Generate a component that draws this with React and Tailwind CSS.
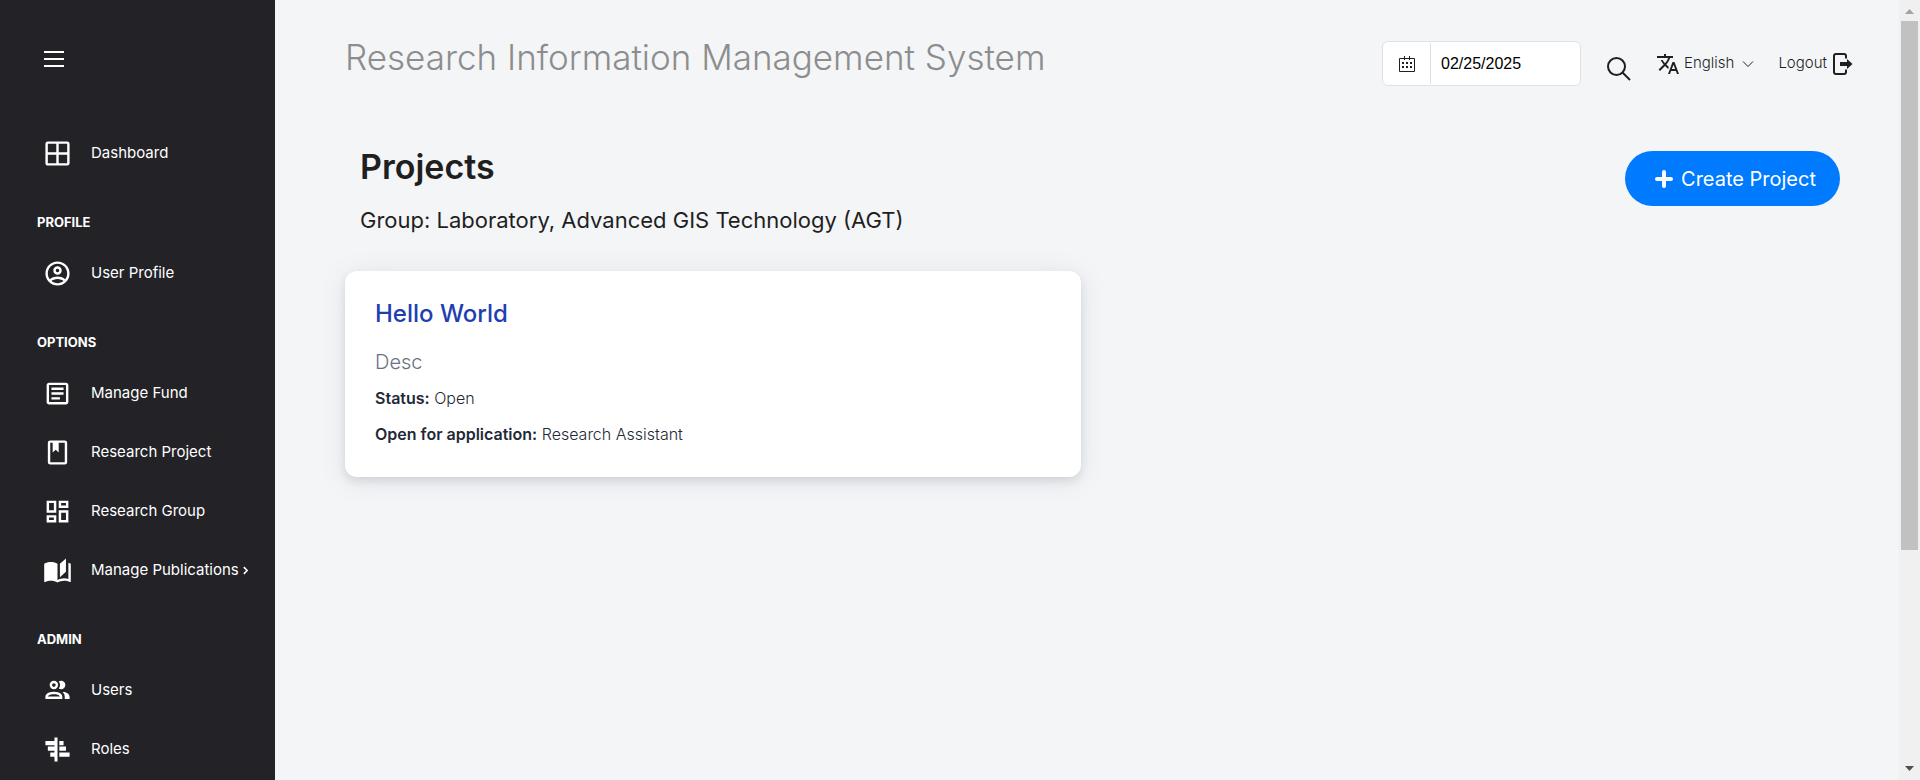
import React from "react";

const icons = {
  grid: "M4,2H20A2,2 0 0,1 22,4V20A2,2 0 0,1 20,22H4C2.92,22 2,21.1 2,20V4A2,2 0 0,1 4,2M4,4V11H11V4H4M4,20H11V13H4V20M20,20V13H13V20H20M20,4H13V11H20V4Z",
  account: "M12,2A10,10 0 0,0 2,12A10,10 0 0,0 12,22A10,10 0 0,0 22,12A10,10 0 0,0 12,2M7.07,18.28C7.5,17.38 10.12,16.5 12,16.5C13.88,16.5 16.5,17.38 16.93,18.28C15.57,19.36 13.86,20 12,20C10.14,20 8.43,19.36 7.07,18.28M18.36,16.83C16.93,15.09 13.46,14.5 12,14.5C10.54,14.5 7.07,15.09 5.64,16.83C4.62,15.5 4,13.82 4,12C4,7.59 7.59,4 12,4C16.41,4 20,7.59 20,12C20,13.82 19.38,15.5 18.36,16.83M12,6C10.06,6 8.5,7.56 8.5,9.5C8.5,11.44 10.06,13 12,13C13.94,13 15.5,11.44 15.5,9.5C15.5,7.56 13.94,6 12,6M12,11A1.5,1.5 0 0,1 10.5,9.5A1.5,1.5 0 0,1 12,8A1.5,1.5 0 0,1 13.5,9.5A1.5,1.5 0 0,1 12,11Z",
  document: "M5,3C3.89,3 3,3.89 3,5V19C3,20.11 3.89,21 5,21H19C20.11,21 21,20.11 21,19V5C21,3.89 20.11,3 19,3H5M5,5H19V19H5V5M7,7V9H17V7H7M7,11V13H17V11H7M7,15V17H14V15H7Z",
  book: "M18,2A2,2 0 0,1 20,4V20A2,2 0 0,1 18,22H6A2,2 0 0,1 4,20V4A2,2 0 0,1 6,2H18M18,4H13V12L10.5,9.75L8,12V4H6V20H18V4Z",
  dashboard: "M19,5V7H15V5H19M9,5V11H5V5H9M19,13V19H15V13H19M9,17V19H5V17H9M21,3H13V9H21V3M11,3H3V13H11V3M21,11H13V21H21V11M11,15H3V21H11V15Z",
  openBook: "M19,2L14,6.5V17.5L19,13V2M6.5,5C4.55,5 2.45,5.4 1,6.5V21.16C1,21.41 1.25,21.66 1.5,21.66C1.6,21.66 1.65,21.59 1.75,21.59C3.1,20.94 5.05,20.5 6.5,20.5C8.45,20.5 10.55,20.9 12,22C13.35,21.15 15.8,20.5 17.5,20.5C19.15,20.5 20.85,20.81 22.25,21.56C22.35,21.61 22.4,21.59 22.5,21.59C22.75,21.59 23,21.34 23,21.09V6.5C22.4,6.05 21.75,5.75 21,5.5V19C19.9,18.65 18.7,18.5 17.5,18.5C15.8,18.5 13.35,19.15 12,20V6.5C10.55,5.4 8.45,5 6.5,5Z",
  users: "M13.07 10.41A5 5 0 0 0 13.07 4.59A3.39 3.39 0 0 1 15 4A3.5 3.5 0 0 1 15 11A3.39 3.39 0 0 1 13.07 10.41M5.5 7.5A3.5 3.5 0 1 1 9 11A3.5 3.5 0 0 1 5.5 7.5M7.5 7.5A1.5 1.5 0 1 0 9 6A1.5 1.5 0 0 0 7.5 7.5M16 17V19H2V17S2 13 9 13 16 17 16 17M14 17C13.86 16.22 12.67 15 9 15S4.07 16.31 4 17M15.95 13A5.32 5.32 0 0 1 18 17V19H22V17S22 13.37 15.94 13Z",
  roles: "M2,5H9.5V2H12V22H9.5V18H6V14.5H9.5V13H4V9.5H9.5V8.5H2V5M13.5,5H17V8.5H13.5V5M13.5,9.5H19V13H13.5V9.5M13.5,14.5H22V18H13.5V14.5Z",
  translate: "M12.87,15.07L10.33,12.56L10.36,12.53C12.1,10.59 13.34,8.36 14.07,6H17V4H10V2H8V4H1V6H12.17C11.5,7.92 10.44,9.75 9,11.35C8.07,10.32 7.3,9.19 6.69,8H4.69C5.42,9.63 6.42,11.17 7.67,12.56L2.58,17.58L4,19L9,14L12.11,17.11L12.87,15.07M18.5,10H16.5L12,22H14L15.12,19H19.87L21,22H23L18.5,10M15.88,17L17.5,12.67L19.12,17H15.88Z",
};

function Icon({ name, className }) {
  return (
    <svg viewBox="0 0 24 24" fill="currentColor" aria-hidden="true" className={className}>
      <path d={icons[name]} />
    </svg>
  );
}

const sections = [
  { items: [{ label: "Dashboard", icon: "grid" }] },
  { title: "PROFILE", items: [{ label: "User Profile", icon: "account" }] },
  {
    title: "OPTIONS",
    items: [
      { label: "Manage Fund", icon: "document" },
      { label: "Research Project", icon: "book" },
      { label: "Research Group", icon: "dashboard" },
      { label: "Manage Publications", icon: "openBook", more: true },
    ],
  },
  {
    title: "ADMIN",
    items: [
      { label: "Users", icon: "users" },
      { label: "Roles", icon: "roles" },
    ],
  },
];

function Sidebar() {
  return (
    <aside className="w-[275px] shrink-0 bg-[#222227] text-white">
      <button type="button" aria-label="Toggle menu" className="ml-11 mt-[49px] block h-5 w-5">
        <svg viewBox="0 0 20 20" stroke="currentColor" strokeWidth="2" aria-hidden="true">
          <path d="M0 3H20M0 10H20M0 17H20" />
        </svg>
      </button>
      <nav className="mt-[55px]">
        {sections.map((section, i) => (
          <section key={i}>
            {section.title && (
              <h2 className="flex h-[61px] items-end pb-3 pl-[37px] text-[13px] leading-5 font-bold">{section.title}</h2>
            )}
            <ul>
              {section.items.map((item) => (
                <li key={item.label}>
                  <a href="#" className="flex h-[59px] items-center pl-[43px] text-[15px]">
                    <Icon name={item.icon} className="mr-[19px] h-[29px] w-[29px]" />
                    <span>{item.label}</span>
                    {item.more && (
                      <svg viewBox="0 0 6 10" fill="none" stroke="currentColor" strokeWidth="2" aria-hidden="true" className="ml-1 h-[9px] w-[5px]">
                        <path d="M1 1L5 5L1 9" />
                      </svg>
                    )}
                  </a>
                </li>
              ))}
            </ul>
          </section>
        ))}
      </nav>
    </aside>
  );
}

function Header() {
  return (
    <header className="flex h-[124px] items-start justify-between pl-[70px] pr-[46px] pt-8">
      <h1 className="text-[35px] leading-[50px] font-light text-[#8d8d8d]">Research Information Management System</h1>
      <div className="flex items-center pt-[9px] text-[15px] font-light text-[#1f1f1f]">
        <label className="flex h-[45px] w-[199px] items-stretch overflow-hidden rounded-md border border-[#dee2e6] bg-white py-px">
          <span className="flex w-12 shrink-0 items-center justify-center border-r border-[#dee2e6]">
            <svg viewBox="0 0 16 16" fill="none" stroke="#1f1f1f" aria-hidden="true" className="h-4 w-4">
              <path d="M0.5 2.5H15.5V15.5H0.5ZM5.5 0V4M10.5 0V4" />
              <path d="M3 7H5M7 7H9M11 7H13M3 11H5M7 11H9M11 11H13" strokeWidth="2" />
            </svg>
          </span>
          <input aria-label="Date" defaultValue="02/25/2025" className="w-full min-w-0 px-2.5 font-['Liberation_Sans',sans-serif] text-[16px] font-normal text-black outline-none" />
        </label>
        <button type="button" aria-label="Search" className="ml-[26px] mt-2.5">
          <svg viewBox="0 0 24 24" fill="none" stroke="currentColor" strokeWidth="2" aria-hidden="true" className="h-6 w-6">
            <circle cx="9.5" cy="9.5" r="8.5" />
            <path d="M15.5 15.5L23 23" />
          </svg>
        </button>
        <button type="button" className="ml-[25px] flex items-center">
          <Icon name="translate" className="h-6 w-6" />
          <span className="ml-1">English</span>
          <svg viewBox="0 0 12 8" fill="none" stroke="currentColor" aria-hidden="true" className="ml-2 h-2 w-3">
            <path d="M1 1.5L6 6.5L11 1.5" />
          </svg>
        </button>
        <a href="#" className="ml-6 flex items-center">
          <span>Logout</span>
          <svg viewBox="0 0 20 22" fill="none" stroke="currentColor" strokeWidth="2" aria-hidden="true" className="ml-1.5 h-[22px] w-5">
            <path d="M13 5.5V3Q13 1 11 1H3Q1 1 1 3V19Q1 21 3 21H11Q13 21 13 19V16.5" />
            <path d="M7 9H14V6L19.5 11L14 16V13H7Z" fill="currentColor" stroke="none" />
          </svg>
        </a>
      </div>
    </header>
  );
}

function ProjectCard() {
  return (
    <article className="ml-[70px] mt-[35px] w-[736px] max-w-full rounded-xl bg-white px-[30px] pt-[25px] pb-[31px] text-[16px] leading-6 font-light text-[#1f2937] shadow-[0_4px_8px_rgba(30,40,60,0.12),0_4px_30px_rgba(30,40,60,0.08)]">
      <h3 className="text-[24px] leading-9 font-medium text-[#1e40af]">Hello World</h3>
      <p className="mt-3.5 text-[20px] leading-8 text-[#6b7280]">Desc</p>
      <p className="mt-2"><strong className="font-semibold">Status:</strong> Open</p>
      <p className="mt-3"><strong className="font-semibold">Open for application:</strong> Research Assistant</p>
    </article>
  );
}

function ScrollRail() {
  return (
    <div aria-hidden="true" className="flex w-[21px] shrink-0 flex-col items-center bg-[#f0f0f0]">
      <svg viewBox="0 0 9 5" className="mb-[7px] mt-[9px] h-[5px] w-[9px]" fill="#a3a3a3"><path d="M0 5L4.5 0L9 5Z" /></svg>
      <div className="w-[17px] flex-[528] bg-[#c1c1c1]" />
      <div className="flex-[216]" />
      <svg viewBox="0 0 9 5" className="mb-[9px] h-[5px] w-[9px]" fill="#505050"><path d="M0 0L4.5 5L9 0Z" /></svg>
    </div>
  );
}

export default function App() {
  return (
    <div className="flex h-screen overflow-hidden bg-[#f4f5f7] font-['Inter',sans-serif]">
      <Sidebar />
      <main className="min-w-0 flex-1">
        <Header />
        <div className="flex items-start justify-between pl-[85px] pr-[59px] text-[#1f1f1f]">
          <div className="pt-5">
            <h2 className="text-[34px] leading-[46px] font-semibold">Projects</h2>
            <p className="mt-3.5 text-[22px] leading-8">Group: Laboratory, Advanced GIS Technology (AGT)</p>
          </div>
          <button type="button" className="mt-[27px] flex h-[55px] items-center rounded-full bg-[#007bff] pl-[30px] pr-6 text-[20px] text-white">
            <svg viewBox="0 0 18 18" stroke="currentColor" strokeWidth="4" strokeLinecap="round" aria-hidden="true" className="mr-2 h-[18px] w-[18px]">
              <path d="M2 9H16M9 2V16" />
            </svg>
            Create Project
          </button>
        </div>
        <ProjectCard />
      </main>
      <ScrollRail />
    </div>
  );
}
